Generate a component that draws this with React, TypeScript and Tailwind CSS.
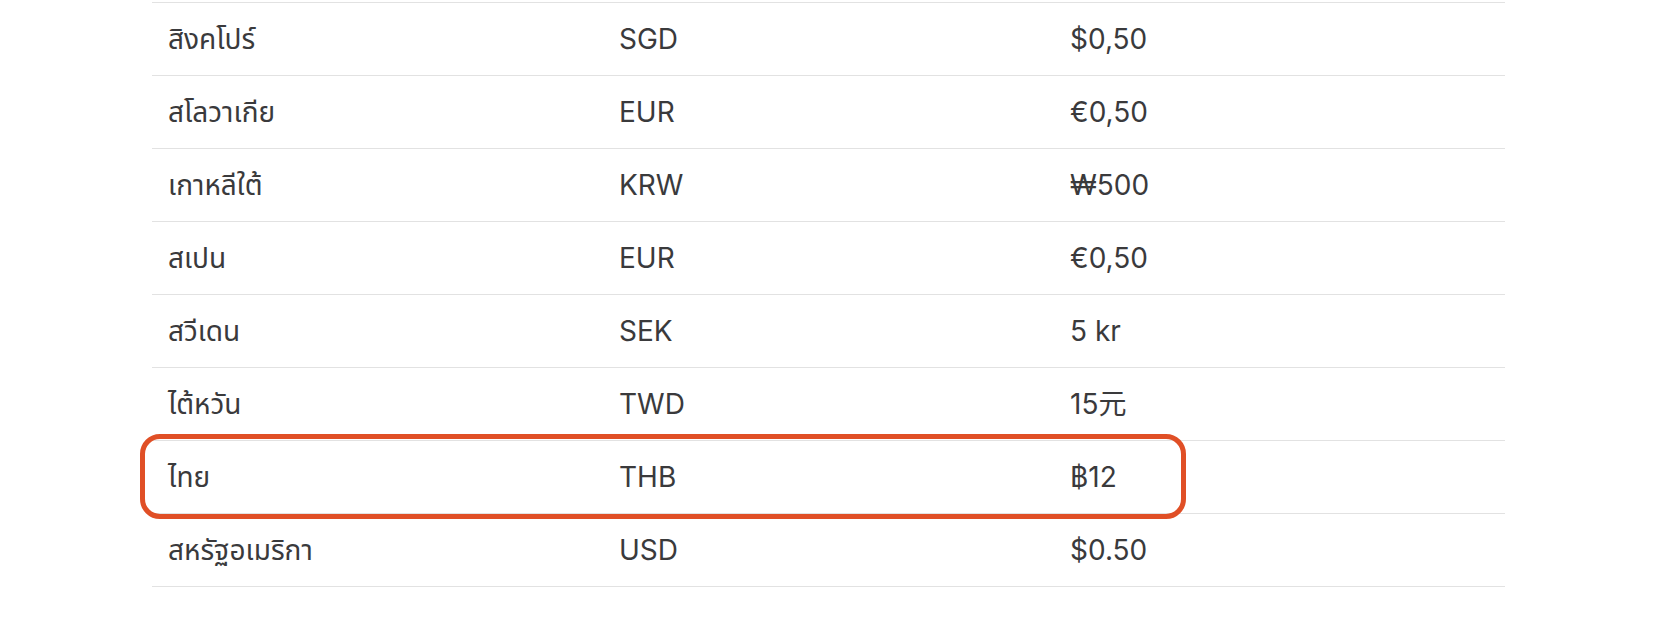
interface CurrencyRow {
  country: string
  code: string
  amount: string
  highlight?: boolean
}

const rows: CurrencyRow[] = [
  { country: 'สิงคโปร์', code: 'SGD', amount: '$0,50' },
  { country: 'สโลวาเกีย', code: 'EUR', amount: '€0,50' },
  { country: 'เกาหลีใต้', code: 'KRW', amount: '₩500' },
  { country: 'สเปน', code: 'EUR', amount: '€0,50' },
  { country: 'สวีเดน', code: 'SEK', amount: '5 kr' },
  { country: 'ไต้หวัน', code: 'TWD', amount: '15元' },
  { country: 'ไทย', code: 'THB', amount: '฿12', highlight: true },
  { country: 'สหรัฐอเมริกา', code: 'USD', amount: '$0.50' },
]

export default function App() {
  return (
    <div className="min-h-[626px] w-full bg-white pt-[2px] font-['Inter','Noto_Sans_Thai','Noto_Sans','Noto_Sans_CJK_TC',sans-serif] text-[28px] text-[#3a3a3c]">
      <div className="ml-[152px] w-[1353px] border-t border-[#e2e2e2]">
        {rows.map((row) => (
          <div
            key={row.country}
            className="relative grid h-[73px] grid-cols-3 items-center border-b border-[#e2e2e2]"
          >
            <div className="px-4">{row.country}</div>
            <div className="px-4">{row.code}</div>
            <div className="px-4">{row.amount}</div>
            {row.highlight && (
              <div className="pointer-events-none absolute -top-[7px] -bottom-[6px] -left-[12px] w-[1046px] rounded-[20px] border-[5px] border-[#e04f26]" />
            )}
          </div>
        ))}
      </div>
    </div>
  )
}
